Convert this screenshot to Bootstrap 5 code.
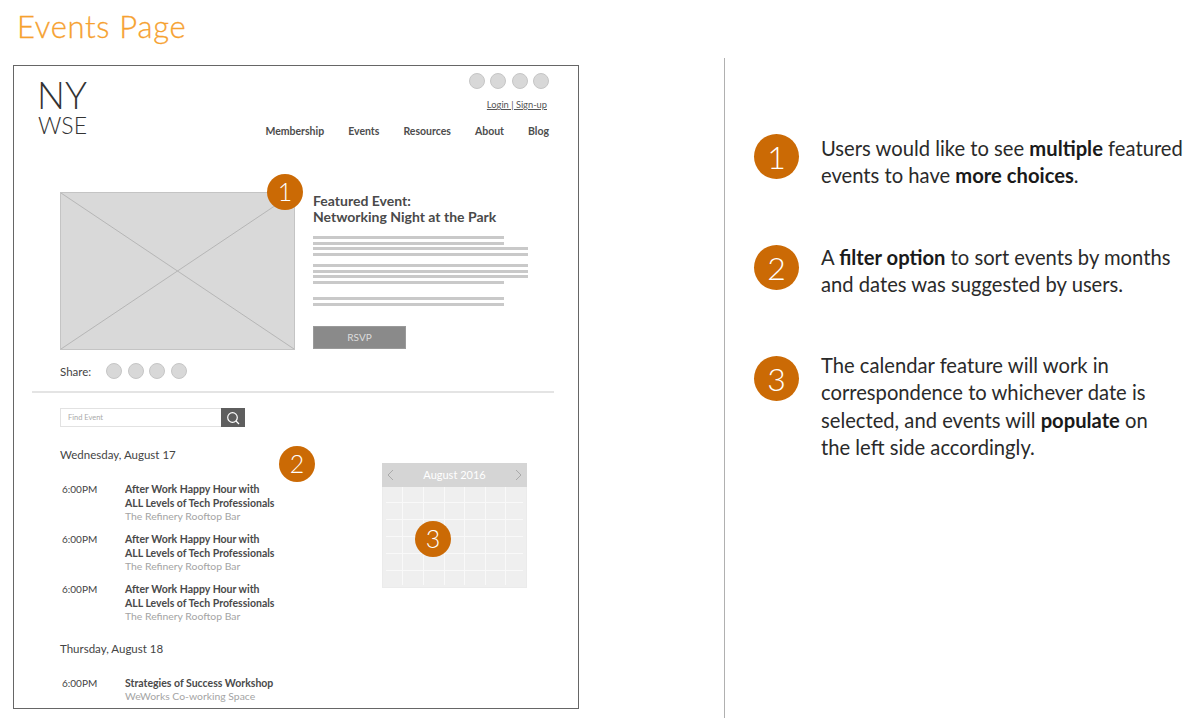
<!DOCTYPE html>
<html lang="en">
<head>
  <meta charset="UTF-8" />
  <title>Events Page</title>
  <link href="https://cdn.jsdelivr.net/npm/bootstrap@5.3.3/dist/css/bootstrap.min.css" rel="stylesheet">
  <style>
    html, body { height: 718px; overflow: hidden; background: #fff; }
    body { font-family: Lato, "Open Sans", sans-serif; color: #444; }
    .board { height: 718px; }
    .left-side { width: 724px; }
    .page-title { height: 65px; margin: 0; padding: 8px 0 0 17px; font-size: 31px; line-height: 36px; font-weight: 300; color: #f6a12f; letter-spacing: .7px; -webkit-text-stroke: .3px #f6a12f; }
    .frame { position: relative; width: 566px; height: 644px; margin-left: 13px; border: 1px solid #666; overflow: hidden; }
    .top-head { height: 112px; padding: 7px 29px 0 24px; }
    .logo-ny { font-size: 37px; line-height: 34px; font-weight: 300; color: #333; margin-top: 5px; margin-left: -1px; }
    .logo-wse { font-size: 23px; line-height: 23px; font-weight: 300; color: #333; margin-top: 2px; }
    .dots { gap: 5.5px; }
    .dot { width: 16px; height: 16px; border-radius: 50%; background: #d8d8d8; border: 1px solid #c6c6c6; }
    .login-link { font-size: 9.3px; line-height: 12px; color: #555; text-decoration: underline; margin-top: 10px; padding-right: 2px; }
    .top-nav { gap: 24px; font-size: 10.5px; line-height: 13px; font-weight: 700; color: #4d4d4d; margin-top: 14px; }
    .hero { position: relative; padding-left: 46px; padding-top: 14px; gap: 18px; }
    .hero-img { width: 235px; height: 158px; background: #d9d9d9; border: 1px solid #c4c4c4; display: block; flex: none; }
    .feat-title { font-size: 14px; line-height: 15.5px; font-weight: 700; color: #4a4a4a; margin-top: 1px; white-space: nowrap; }
    .text-lines { margin-top: 12px; }
    .tl { height: 3px; background: #c9c9c9; margin-bottom: 2.7px; width: 191px; }
    .tl-w { width: 215px; }
    .tl-gap { margin-top: 8px; }
    .tl-gap2 { margin-top: 13px; }
    .rsvp { width: 93px; height: 23px; background: #8a8a8a; border: 1px solid #9a9a9a; color: #ddd; font-size: 10px; line-height: 21px; text-align: center; margin-top: 20px; }
    .share-row { padding: 13px 0 0 46px; height: 38px; }
    .share-label { font-size: 11.5px; line-height: 17px; width: 46px; color: #444; }
    .rule { height: 2px; background: #e4e4e4; margin: 3px 24px 0 18px; }
    .lower { position: relative; padding: 15px 0 0 46px; }
    .find-box { width: 185px; height: 19px; }
    .find-input { flex: 1; border: 1px solid #e2e2e2; border-right: 0; font-size: 7.5px; line-height: 17px; color: #aaa; padding-left: 7px; }
    .find-btn { width: 24px; background: #5e5e5e; display: flex; align-items: center; justify-content: center; }
    .day-head { font-size: 11.5px; line-height: 14px; color: #444; }
    .day-one { margin-top: 21px; margin-bottom: 20px; }
    .day-two { margin-top: 19px; margin-bottom: 20px; }
    .ev-row { margin-bottom: 9px; font-size: 10px; line-height: 14px; }
    .ev-time { width: 65px; padding-left: 2px; color: #444; flex: none; }
    .ev-name { font-weight: 700; color: #4a4a4a; font-size: 10.5px; }
    .ev-place { color: #a4a4a4; font-size: 10.4px; margin-top: -1px; }
    .cal { position: absolute; left: 368px; top: 70px; width: 145px; height: 125px; background: #efefef; border: 1px solid #ebebeb; }
    .cal-head { height: 24px; background: #d5d5d5; color: #fff; font-size: 11px; line-height: 26px; padding: 0 5px; margin: -1px -1px 0; }
    .cal-grid { display: block; }
    .num-badge { display: flex; align-items: center; justify-content: center; border-radius: 50%; background: #cb6a05; color: #fff; font-weight: 300; }
    .num-sm { position: absolute; width: 36px; height: 36px; font-size: 25px; }
    .badge-one { left: 253px; top: -4px; }
    .badge-two { left: 265px; top: 53px; }
    .badge-three { left: 32px; top: 57px; }
    .mid-line { width: 1px; background: #b0b0b0; margin-top: 58px; flex: none; }
    .notes { padding: 134px 0 0 29px; flex: 1; }
    .note { gap: 22px; color: #2a2a2a; font-size: 20.2px; line-height: 27.3px; }
    .note-one { height: 111px; }
    .num-lg { width: 45px; height: 45px; font-size: 32px; flex: none; }
    .note-text { white-space: nowrap; margin-top: 1px; }
    .note-mid { margin-top: -1px; }
    .note-last { margin-top: -4px; }
    .note-text b { font-weight: 700; color: #1a1a1a; }
  </style>
</head>
<body>
  <div class="board d-flex">
    <div class="left-side">
      <h1 class="page-title">Events Page</h1>
      <div class="frame">
        <div class="top-head d-flex justify-content-between">
          <div>
            <div class="logo-ny">NY</div>
            <div class="logo-wse">WSE</div>
          </div>
          <div class="d-flex flex-column align-items-end">
            <div class="d-flex dots"><div class="dot"></div><div class="dot"></div><div class="dot"></div><div class="dot"></div></div>
            <div class="login-link">Login | Sign-up</div>
            <div class="d-flex top-nav"><span>Membership</span><span>Events</span><span>Resources</span><span>About</span><span>Blog</span></div>
          </div>
        </div>
        <div class="hero d-flex">
          <svg class="hero-img" viewBox="0 0 235 158" preserveAspectRatio="none">
            <line x1="0" y1="0" x2="235" y2="158" stroke="#b5b5b5" stroke-width="1"/>
            <line x1="235" y1="0" x2="0" y2="158" stroke="#b5b5b5" stroke-width="1"/>
          </svg>
          <div class="num-badge num-sm badge-one">1</div>
          <div>
            <div class="feat-title">Featured Event:<br>Networking Night at the Park</div>
            <div class="text-lines">
              <div class="tl"></div><div class="tl"></div><div class="tl tl-w"></div><div class="tl tl-w"></div>
              <div class="tl tl-w tl-gap"></div><div class="tl tl-w"></div><div class="tl tl-w"></div><div class="tl"></div>
              <div class="tl tl-gap2"></div><div class="tl"></div>
            </div>
            <div class="rsvp">RSVP</div>
          </div>
        </div>
        <div class="share-row d-flex">
          <div class="share-label">Share:</div>
          <div class="d-flex dots"><div class="dot"></div><div class="dot"></div><div class="dot"></div><div class="dot"></div></div>
        </div>
        <div class="rule"></div>
        <div class="lower">
          <div class="find-box d-flex">
            <div class="find-input">Find Event</div>
            <div class="find-btn">
              <svg width="14" height="14" viewBox="0 0 14 14" fill="none" stroke="#fff" stroke-width="1.2"><circle cx="6.5" cy="6.5" r="4.8"/><line x1="10" y1="10" x2="13" y2="13"/></svg>
            </div>
          </div>
          <div class="day-head day-one">Wednesday, August 17</div>
          <div class="ev-row d-flex"><div class="ev-time">6:00PM</div><div><div class="ev-name">After Work Happy Hour with<br>ALL Levels of Tech Professionals</div><div class="ev-place">The Refinery Rooftop Bar</div></div></div>
          <div class="ev-row d-flex"><div class="ev-time">6:00PM</div><div><div class="ev-name">After Work Happy Hour with<br>ALL Levels of Tech Professionals</div><div class="ev-place">The Refinery Rooftop Bar</div></div></div>
          <div class="ev-row d-flex"><div class="ev-time">6:00PM</div><div><div class="ev-name">After Work Happy Hour with<br>ALL Levels of Tech Professionals</div><div class="ev-place">The Refinery Rooftop Bar</div></div></div>
          <div class="day-head day-two">Thursday, August 18</div>
          <div class="ev-row d-flex"><div class="ev-time">6:00PM</div><div><div class="ev-name">Strategies of Success Workshop</div><div class="ev-place">WeWorks Co-working Space</div></div></div>
          <div class="num-badge num-sm badge-two">2</div>
          <div class="cal">
            <div class="cal-head d-flex align-items-center justify-content-between">
              <svg width="7" height="12" viewBox="0 0 7 12" fill="none" stroke="#aaa"><polyline points="6,1 1,6 6,11"/></svg>
              <span>August 2016</span>
              <svg width="7" height="12" viewBox="0 0 7 12" fill="none" stroke="#aaa"><polyline points="1,1 6,6 1,11"/></svg>
            </div>
            <svg class="cal-grid" width="143" height="100" viewBox="0 0 143 100" stroke="#f9f9f9" stroke-width="1">
              <line x1="19.5" y1="0" x2="19.5" y2="98"/><line x1="40.5" y1="0" x2="40.5" y2="98"/><line x1="61.5" y1="0" x2="61.5" y2="98"/><line x1="81.5" y1="0" x2="81.5" y2="98"/><line x1="102.5" y1="0" x2="102.5" y2="98"/><line x1="122.5" y1="0" x2="122.5" y2="98"/>
              <line x1="3" y1="15.5" x2="140" y2="15.5"/><line x1="3" y1="32.5" x2="140" y2="32.5"/><line x1="3" y1="49.5" x2="140" y2="49.5"/><line x1="3" y1="66.5" x2="140" y2="66.5"/><line x1="3" y1="83.5" x2="140" y2="83.5"/>
            </svg>
            <div class="num-badge num-sm badge-three">3</div>
          </div>
        </div>
      </div>
    </div>
    <div class="mid-line"></div>
    <div class="notes">
      <div class="note note-one d-flex"><div class="num-badge num-lg">1</div><div class="note-text">Users would like to see <b>multiple</b> featured<br>events to have <b>more choices</b>.</div></div>
      <div class="note note-one d-flex"><div class="num-badge num-lg">2</div><div class="note-text note-mid">A <b>filter option</b> to sort events by months<br>and dates was suggested by users.</div></div>
      <div class="note d-flex"><div class="num-badge num-lg">3</div><div class="note-text note-last">The calendar feature will work in<br>correspondence to whichever date is<br>selected, and events will <b>populate</b> on<br>the left side accordingly.</div></div>
    </div>
  </div>
  <script src="https://cdn.jsdelivr.net/npm/bootstrap@5.3.3/dist/js/bootstrap.bundle.min.js"></script>
</body>
</html>
